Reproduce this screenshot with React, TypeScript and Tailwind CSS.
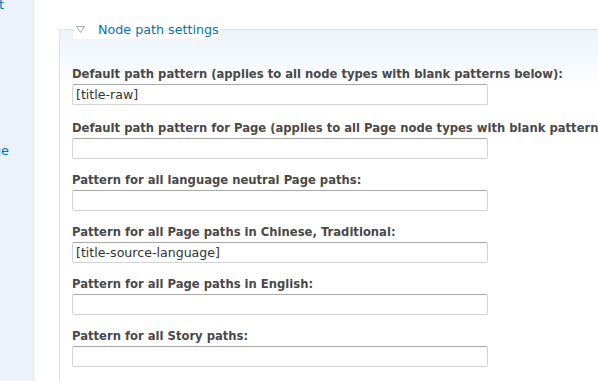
import React from "react";

const fields = [
  { label: "Default path pattern (applies to all node types with blank patterns below):", value: "[title-raw]" },
  { label: "Default path pattern for Page (applies to all Page node types with blank patterns below):", value: "" },
  { label: "Pattern for all language neutral Page paths:", value: "" },
  { label: "Pattern for all Page paths in Chinese, Traditional:", value: "[title-source-language]" },
  { label: "Pattern for all Page paths in English:", value: "" },
  { label: "Pattern for all Story paths:", value: "" },
];

export default function App() {
  return (
    <div className="flex h-[381px] w-[598px] overflow-hidden bg-white font-['DejaVu_Sans',Verdana,sans-serif]">
      {/* sidebar, scrolled off to the left */}
      <div className="relative w-[34px] shrink-0 overflow-hidden border-r border-[#dde8f3] bg-[#ebf2f9]">
        <div className="flex w-[4px] justify-end whitespace-nowrap text-[13px] leading-[13px] text-[#0074bd] -mt-[2px]">
          <span>Content</span>
        </div>
        <div className="mt-[133px] flex w-[9px] justify-end whitespace-nowrap text-[13px] leading-[14px] text-[#0074bd]">
          <span>Manage</span>
        </div>
      </div>

      <div className="flex-1 pl-[25px] pt-[19px]">
        <fieldset className="w-[700px] border-l border-t border-[#d8e4f0] bg-gradient-to-b from-[#ecf3fa] to-white to-[60px] pb-6 pl-[12px]">
          <legend className="ml-[1px] flex items-center bg-white pr-[2px] pt-[2px] text-[12.7px] leading-[18px] text-[#0074bd]">
            <svg width="22" height="12" viewBox="0 0 22 12" className="mr-[3px]">
              <path d="M3.5 2.5 L11.5 2.5 L7.5 8.5 Z" fill="white" stroke="#a9a9a9" strokeWidth="1" />
            </svg>
            <span>Node path settings</span>
          </legend>

          <div className="flex flex-col pt-[28px]">
            {fields.map((f, i) => (
              <div key={i} className={`flex flex-col ${i === 0 ? "mb-[16px]" : "mb-[14px]"}`}>
                <label className="whitespace-nowrap text-[11.6px] font-bold leading-[14px] text-[#494949]">
                  {f.label}
                </label>
                <input
                  readOnly
                  value={f.value}
                  className="mt-[3px] h-[21px] w-[416px] rounded-[2px] border border-[#d4d4d4] border-t-[#a8a8a8] bg-white px-[3px] text-[12.6px] text-[#333] outline-none"
                />
              </div>
            ))}
          </div>
        </fieldset>
      </div>
    </div>
  );
}
